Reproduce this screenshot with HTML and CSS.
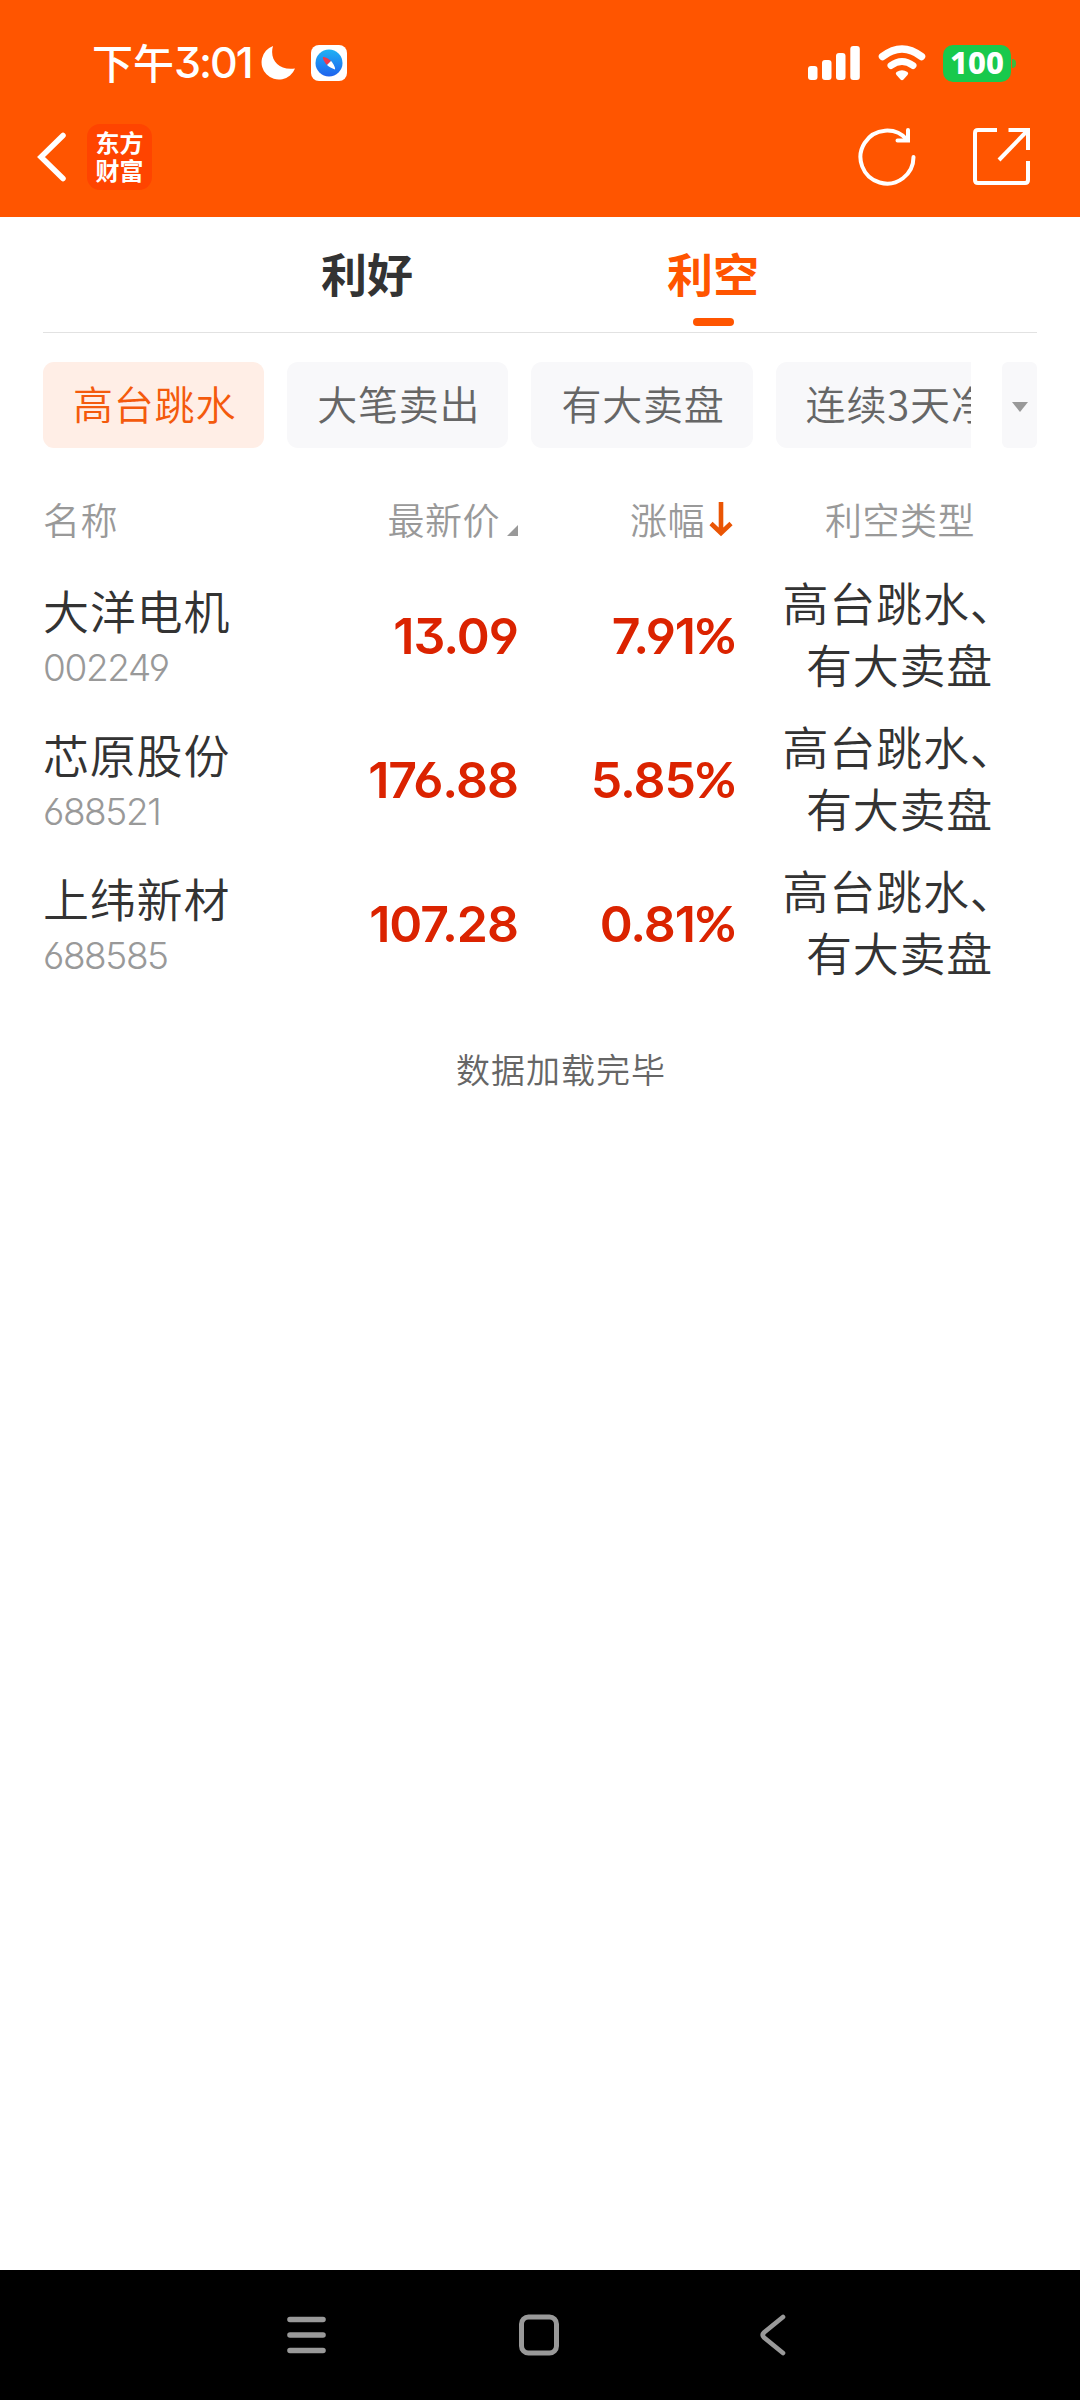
FILE: index.html
```html
<!DOCTYPE html>
<html lang="zh-CN">

<head>
    <meta charset="UTF-8">
    <meta name="viewport" content="width=device-width, initial-scale=1.0">
    <title>利空 - 东方财富</title>
    <link rel="stylesheet" href="styles.css">
</head>

<body>
    <header>
        <div class="status">
            <span class="time">下午<span class="clock">3:01</span></span>
            <svg class="moon" width="36" height="36" viewBox="0 0 36 36">
                <path d="M13 1A17.300 17.300 0 1 0 35 23.500C19 26 9 15 13 1z" fill="#fff" />
            </svg>
            <svg class="compass" width="36" height="36" viewBox="0 0 36 36">
                <defs>
                    <linearGradient id="blue" x1="0" y1="0" x2="0" y2="1">
                        <stop offset="0" stop-color="#1fb2f4" />
                        <stop offset="1" stop-color="#1e62ee" />
                    </linearGradient>
                </defs>
                <rect width="36" height="36" rx="8" fill="#fff" />
                <circle cx="18" cy="18" r="13.500" fill="url(#blue)" />
                <path d="M12 12c2-.5 6 2 8 4l-4 4c-2-2-4.500-6-4-8z" fill="#f0394a" />
                <path d="M24 24.500c-2-.5-6-2.500-8-4.500l4-4c2 2 4.500 6.500 4 8.500z" fill="#fff" />
            </svg>
            <div class="status-right">
                <svg width="52" height="34" viewBox="0 0 52 34" fill="#fff">
                    <rect x="0" y="20" width="9.500" height="14" rx="3" />
                    <rect x="14" y="14" width="9.500" height="20" rx="3" />
                    <rect x="28" y="7" width="9.500" height="27" rx="3" />
                    <rect x="42.300" y="0" width="9.500" height="34" rx="3" />
                </svg>
                <svg class="wifi" width="48" height="36" viewBox="0 0 48 36">
                    <path d="M4.500 11.500Q24-3.500 43.500 11.500" fill="none" stroke="#fff" stroke-width="7.500" stroke-linecap="round" />
                    <path d="M13 20.500Q24 12.500 35 20.500" fill="none" stroke="#fff" stroke-width="7" stroke-linecap="round" />
                    <path d="M18.500 27Q24 23.500 29.500 27Q31 28.500 29.500 30L25.500 34.500Q24 36 22.500 34.500L18.500 30Q17 28.500 18.500 27z" fill="#fff" />
                </svg>
                <span class="battery">100</span>
                <span class="battery-tip"></span>
            </div>
        </div>
        <div class="titlebar">
            <svg class="back" width="30" height="50" viewBox="0 0 30 50">
                <path d="M26 3.500L4 25L26 46.500" fill="none" stroke="#fff" stroke-width="5.500" stroke-linecap="round" stroke-linejoin="miter" />
            </svg>
            <div class="logo">东方<br>财富</div>
            <svg class="refresh" width="58" height="58" viewBox="0 0 58 58" fill="none" stroke="#fff" stroke-width="4">
                <path d="M55.500 29A26.500 26.500 0 1 1 49 11.700" stroke-linecap="round" />
                <path d="M50 2V12.500H39.500" stroke-linecap="round" />
            </svg>
            <svg width="58" height="58" viewBox="0 0 58 58" fill="none" stroke="#fff" stroke-width="4">
                <path d="M24 2H5Q2 2 2 5V52Q2 55 5 55H52Q55 55 55 52V33" />
                <path d="M35.500 2H55V22" />
                <path d="M55 2L26 32" />
            </svg>
        </div>
    </header>

    <main>
        <nav class="tabs">
            <a class="tab">利好</a>
            <a class="tab active">利空</a>
        </nav>

        <div class="filter">
            <div class="chips">
                <span class="chip selected">高台跳水</span>
                <span class="chip">大笔卖出</span>
                <span class="chip">有大卖盘</span>
                <span class="chip">连续3天净流出</span>
            </div>
            <div class="more"><span class="triangle"></span></div>
        </div>

        <div class="row head">
            <div>名称</div>
            <div class="right">最新价<span class="corner"></span></div>
            <div class="right">涨幅<svg class="arrow" width="24" height="36" viewBox="0 0 24 36">
                    <path d="M12 1V32M2 22.500L12 32L22 22.500" fill="none" stroke="#ea5504" stroke-width="4.600" />
                </svg></div>
            <div class="type">利空类型</div>
        </div>

        <div class="row">
            <div>
                <div class="name">大洋电机</div>
                <div class="code">002249</div>
            </div>
            <div class="num">13.09</div>
            <div class="num">7.91<span class="pct">%</span></div>
            <div class="type">高台跳水、有大卖盘</div>
        </div>
        <div class="row">
            <div>
                <div class="name">芯原股份</div>
                <div class="code">688521</div>
            </div>
            <div class="num">176.88</div>
            <div class="num">5.85<span class="pct">%</span></div>
            <div class="type">高台跳水、有大卖盘</div>
        </div>
        <div class="row">
            <div>
                <div class="name">上纬新材</div>
                <div class="code">688585</div>
            </div>
            <div class="num">107.28</div>
            <div class="num">0.81<span class="pct">%</span></div>
            <div class="type">高台跳水、有大卖盘</div>
        </div>

        <p class="done">数据加载完毕</p>
    </main>

    <footer>
        <svg width="40" height="38" viewBox="0 0 40 38" stroke="#999" stroke-width="5.600" stroke-linecap="round">
            <path d="M4 3.500H37M4 19H37M4 34.500H37" />
        </svg>
        <svg class="home" width="42" height="42" viewBox="0 0 42 42">
            <rect x="3.500" y="3" width="35" height="36" rx="7" fill="none" stroke="#999" stroke-width="5" />
        </svg>
        <svg width="28" height="42" viewBox="0 0 28 42">
            <path d="M24 3L5 18.500Q2.500 21 5 23.500L24 39" fill="none" stroke="#999" stroke-width="4.600" stroke-linecap="round" />
        </svg>
    </footer>
</body>

</html>
```

FILE: styles.css
```css
* {
    box-sizing: border-box;
}

body {
    margin: 0;
    height: 2400px;
    display: flex;
    flex-direction: column;
    background-color: #fff;
    color: #333;
    font-family: "Noto Sans CJK SC", sans-serif;
    overflow: hidden;
}

svg {
    display: block;
    flex: none;
}

header {
    height: 217px;
    background-color: #ff5500;
    color: #fff;
}

/* Status bar */
.status {
    height: 126px;
    display: flex;
    align-items: center;
    padding-left: 92px;
    padding-right: 64px;
}

.time {
    display: flex;
    align-items: center;
    width: 168px;
    padding-bottom: 5px;
    font-size: 41px;
    font-weight: 500;
    line-height: 60px;
    white-space: nowrap;
}

.clock {
    padding-top: 3px;
    font-family: Inter, sans-serif;
    font-feature-settings: "cv09";
    font-size: 43px;
    letter-spacing: -2px;
}

.compass {
    margin-left: 15px;
}

.status-right {
    margin-left: auto;
    display: flex;
    align-items: center;
}

.wifi {
    margin-left: 18px;
}

.battery {
    margin-left: 17px;
    width: 68px;
    height: 37px;
    border-radius: 10px;
    background-color: #18c94c;
    font-family: "Noto Sans", sans-serif;
    font-size: 31px;
    font-weight: 800;
    line-height: 35px;
    text-align: center;
}

.battery-tip {
    margin-left: 1px;
    width: 4px;
    height: 9px;
    border-radius: 0 4px 4px 0;
    background-color: #3cb93c;
}

/* Title bar */
.titlebar {
    height: 62px;
    display: flex;
    align-items: center;
    padding-left: 37px;
    padding-right: 49px;
}

.logo {
    margin-left: 20px;
    margin-right: auto;
    width: 65px;
    height: 66px;
    padding-top: 4px;
    border-radius: 13px;
    background-color: #ff4400;
    font-size: 24px;
    font-weight: 700;
    line-height: 28px;
    text-align: center;
}

.refresh {
    margin-right: 57px;
}

main {
    flex: 1;
    padding: 0 43px;
}

/* Tabs */
.tabs {
    height: 116px;
    display: flex;
    justify-content: center;
    border-bottom: 1px solid #e2e2e2;
}

.tab {
    width: 346px;
    display: flex;
    flex-direction: column;
    align-items: center;
    padding-top: 25px;
    font-size: 46px;
    font-weight: 700;
    line-height: 60px;
}

.tab.active {
    color: #ff5500;
}

.tab.active::after {
    content: "";
    width: 41px;
    height: 8px;
    margin-top: 16px;
    border-radius: 4px;
    background-color: #ff5500;
}

/* Filter chips */
.filter {
    margin-top: 29px;
    display: flex;
    justify-content: space-between;
}

.chips {
    width: 928px;
    margin-right: 31px;
    display: flex;
    gap: 23px;
    overflow: hidden;
}

.chip {
    flex: none;
    height: 86px;
    padding: 0 28px 0 30px;
    border-radius: 11px;
    background-color: #f8f8fa;
    color: #666;
    font-size: 40px;
    font-weight: 350;
    letter-spacing: 0.8px;
    line-height: 83px;
    white-space: nowrap;
}

.chip.selected {
    background-color: #ffeee6;
    color: #f45a0c;
}

.more {
    width: 35px;
    height: 86px;
    display: flex;
    align-items: center;
    justify-content: center;
    border-radius: 6px;
    background-color: #f8f8fa;
}

.triangle {
    margin-top: 3px;
    border-left: 8px solid transparent;
    border-right: 8px solid transparent;
    border-top: 10px solid #999;
}

/* Stock list */
.row {
    height: 144px;
    display: grid;
    grid-template-columns: 258px 217px 217px 1fr;
    align-items: center;
    font-weight: 350;
}

.row.head {
    height: 115px;
    padding-top: 27px;
    align-items: start;
    color: #999;
    font-size: 37px;
    letter-spacing: 0.5px;
    line-height: 88px;
}

.right {
    display: flex;
    justify-content: flex-end;
    align-items: center;
}

.corner {
    margin-left: 7px;
    margin-top: 22px;
    border-left: 11px solid transparent;
    border-bottom: 11px solid #999;
}

.arrow {
    margin-left: 4px;
    margin-right: 2px;
}

.name {
    font-size: 46px;
    letter-spacing: 0.8px;
    line-height: 60px;
}

.code {
    padding-top: 3px;
    margin-bottom: -3px;
    color: #999;
    font-family: Inter, sans-serif;
    font-feature-settings: "cv03", "cv04", "cv09";
    font-size: 37px;
    font-weight: 300;
    letter-spacing: -1.4px;
    line-height: 52px;
}

.num {
    padding-top: 1px;
    color: #db2300;
    font-family: Inter, sans-serif;
    font-feature-settings: "cv03", "cv04", "cv09";
    font-size: 50px;
    font-weight: 600;
    letter-spacing: -1px;
    line-height: 60px;
    text-align: right;
}

.pct {
    font-family: Lato, sans-serif;
    font-weight: 700;
}

.type {
    padding-left: 27px;
    padding-bottom: 7px;
    font-size: 46px;
    letter-spacing: 0.8px;
    line-height: 62px;
    text-align: center;
}

.head .type {
    padding-left: 28px;
    padding-bottom: 0;
    font-size: 37px;
    letter-spacing: 0.5px;
    line-height: 88px;
}

.done {
    margin: 49px 0 0 42px;
    color: #666;
    font-size: 34px;
    font-weight: 350;
    letter-spacing: 1px;
    line-height: 50px;
    text-align: center;
}

/* System navigation */
footer {
    height: 130px;
    display: flex;
    align-items: center;
    padding: 0 293px 0 286px;
    background-color: #000;
}

.home {
    margin-left: 192px;
    margin-right: auto;
}
```
